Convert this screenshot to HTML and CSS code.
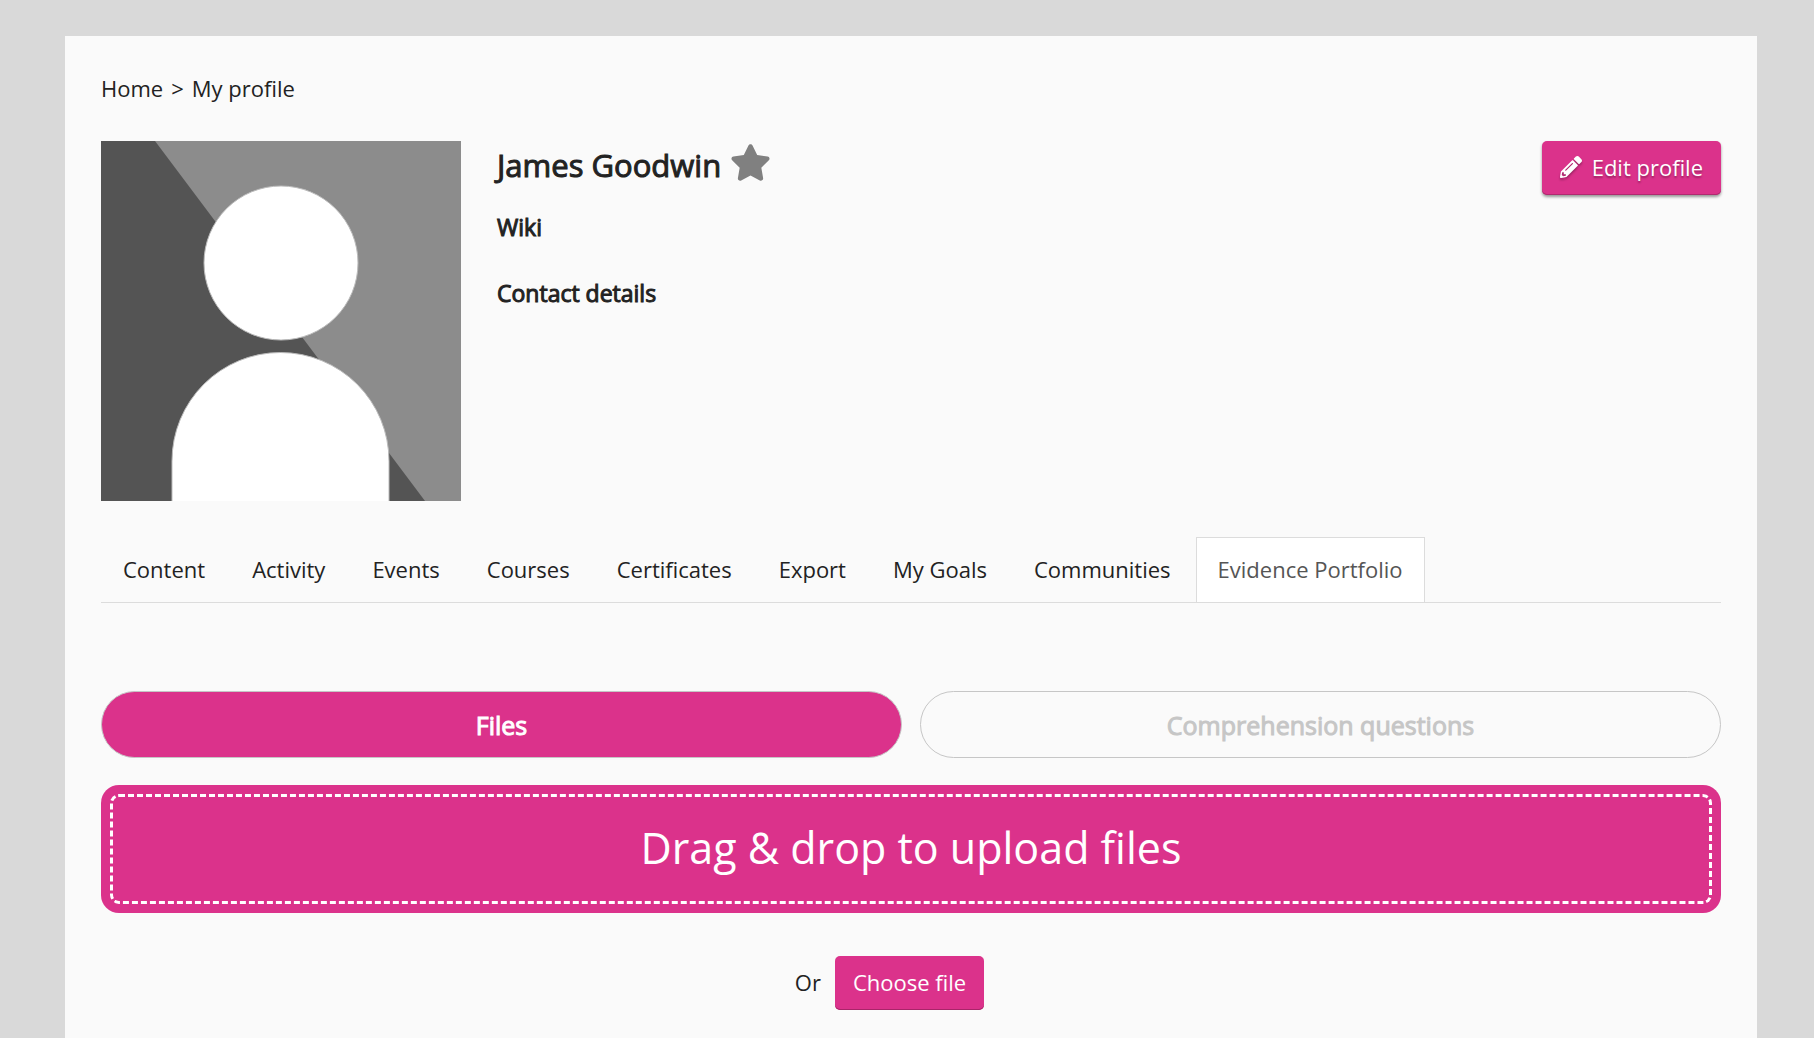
FILE: index.html
```html
<!DOCTYPE html>
<html lang="en">
<head>
    <meta charset="UTF-8">
    <meta name="viewport" content="width=device-width, initial-scale=1.0">
    <title>My profile</title>
    <link rel="stylesheet" href="styles.css">
</head>
<body>
    <main class="page">
        <nav class="breadcrumb" aria-label="Breadcrumb">
            <a href="#">Home</a>
            <span>&gt;</span>
            <a href="#">My profile</a>
        </nav>

        <section class="profile">
            <svg class="avatar" viewBox="0 0 360 360" role="img" aria-label="Profile picture">
                <rect width="360" height="360" fill="#8c8c8c"/>
                <path d="M0 0H54L324 360H0Z" fill="#545454"/>
                <g fill="#fff" stroke="#bbb" stroke-width="1">
                    <circle cx="180" cy="122" r="77"/>
                    <path d="M71 362V320A108.500 108.500 0 0 1 288 320V362Z"/>
                </g>
            </svg>
            <div class="details">
                <div class="name">
                    <h1>James Goodwin</h1>
                    <button class="favourite" aria-label="Add to favourites">
                        <svg viewBox="0 0 576 512"><path fill="#808080" d="M259.3 17.8L194 150.200 47.900 171.500c-26.200 3.800-36.700 36.100-17.700 54.600l105.700 103-25 145.500c-4.500 26.300 23.200 46 46.400 33.700L288 439.600l130.700 68.700c23.200 12.200 50.900-7.400 46.400-33.700l-25-145.500 105.700-103c19-18.500 8.500-50.800-17.700-54.600L382 150.200 316.700 17.800c-11.700-23.600-45.600-23.900-57.400 0z"/></svg>
                    </button>
                </div>
                <h2>Wiki</h2>
                <h2>Contact details</h2>
            </div>
            <button class="btn edit">
                <svg viewBox="0 0 512 512"><path fill="currentColor" d="M497.900 142.100l-46.100 46.100c-4.700 4.700-12.300 4.700-17 0l-111-111c-4.700-4.700-4.700-12.300 0-17l46.100-46.100c18.700-18.700 49.100-18.700 67.900 0l60.100 60.100c18.800 18.700 18.800 49.100 0 67.900zM284.200 99.800L21.600 362.400.4 483.900c-2.900 16.400 11.400 30.600 27.800 27.800l121.500-21.300 262.600-262.600c4.700-4.700 4.700-12.300 0-17l-111-111c-4.800-4.700-12.400-4.700-17.100 0zM124.100 339.900c-5.500-5.500-5.500-14.300 0-19.800l154-154c5.500-5.500 14.300-5.500 19.800 0s5.500 14.300 0 19.800l-154 154c-5.500 5.500-14.300 5.500-19.800 0zM88 424h48v36.300l-64.500 11.300-31.100-31.100L51.700 376H88v48z"/></svg>
                Edit profile
            </button>
        </section>

        <nav class="tabs" aria-label="Profile sections">
            <a href="#">Content</a>
            <a href="#">Activity</a>
            <a href="#">Events</a>
            <a href="#">Courses</a>
            <a href="#">Certificates</a>
            <a href="#">Export</a>
            <a href="#">My Goals</a>
            <a href="#">Communities</a>
            <a href="#" class="active" aria-current="page">Evidence Portfolio</a>
        </nav>

        <div class="switch">
            <button class="pill selected">Files</button>
            <button class="pill">Comprehension questions</button>
        </div>

        <div class="dropzone">
            <div class="dropzone-inner">Drag &amp; drop to upload files</div>
        </div>

        <div class="choose">
            <span>Or</span>
            <button class="btn">Choose file</button>
        </div>
    </main>
</body>
</html>
```
FILE: styles.css
```css
* {
    box-sizing: border-box;
}

body {
    margin: 0;
    padding: 36px 57px 0 65px;
    background-color: #d9d9d9;
    color: #222;
    font-family: "Open Sans", "Noto Sans", sans-serif;
    font-size: 22px;
    line-height: 32px;
}

button {
    font: inherit;
    cursor: pointer;
}

a {
    color: inherit;
    text-decoration: none;
}

.page {
    min-height: calc(100vh - 36px);
    padding: 36px;
    background-color: #fafafa;
}

.breadcrumb {
    display: flex;
    gap: 8px;
    margin-bottom: 37px;
}

.profile {
    display: flex;
    align-items: flex-start;
    gap: 36px;
}

.avatar {
    width: 360px;
    height: 360px;
    flex-shrink: 0;
}

.details {
    flex: 1;
}

.name {
    display: flex;
    align-items: center;
    gap: 9px;
    margin-bottom: 22px;
}

/* regular weight thickened with a stroke */
h1, h2, .pill {
    font-weight: 400;
    -webkit-text-stroke: 1px currentColor;
}

h1 {
    margin: 0;
    font-size: 31px;
    line-height: 48px;
}

h2 {
    margin: 0 0 34px;
    font-size: 23px;
    line-height: 32px;
}

.favourite {
    padding: 0;
    border: none;
    background: none;
}

.favourite svg {
    display: block;
    width: 41px;
    height: 37px;
    margin-bottom: 6px;
}

.btn {
    display: flex;
    align-items: center;
    height: 54px;
    padding: 0 18px 2px;
    border: none;
    border-radius: 5px;
    background-color: #db328b;
    color: #fff;
    box-shadow: inset 0 -1px 0 #a92469;
}

.edit {
    gap: 10px;
    box-shadow: inset 0 -1px 0 #b02a70, 0 2px 3px rgba(0, 0, 0, 0.4);
    text-shadow: 0 2px 2px rgba(0, 0, 0, 0.3);
}

.edit svg {
    width: 22px;
    height: 22px;
    filter: drop-shadow(0 2px 1px rgba(0, 0, 0, 0.3));
}

.tabs {
    display: flex;
    gap: 3px;
    margin-top: 36px;
    border-bottom: 1px solid #dcdcdc;
}

.tabs a {
    padding: 15px 21px 17px;
    border: 1px solid transparent;
    border-bottom: none;
}

.tabs .active {
    border-color: #dcdcdc;
    background-color: #fff;
    color: #555;
}

.switch {
    display: grid;
    grid-template-columns: 1fr 1fr;
    gap: 18px;
    margin: 88px 0 27px;
}

.pill {
    height: 67px;
    border: 1px solid #c6c6c6;
    border-radius: 34px;
    background: none;
    color: #c6c6c6;
    font-size: 25px;
}

.selected {
    background-color: #db328b;
    color: #fff;
}

.dropzone {
    padding: 9px;
    border-radius: 18px;
    background-color: #db328b;
}

.dropzone-inner {
    padding: 19px 20px 21px;
    border: 3px dashed #fff;
    border-radius: 9px;
    color: #fff;
    font-size: 43px;
    line-height: 64px;
    text-align: center;
}

.choose {
    display: flex;
    justify-content: center;
    align-items: center;
    gap: 14px;
    margin-top: 43px;
    padding-right: 43px;
}

.choose span {
    padding-bottom: 2px;
}
```
